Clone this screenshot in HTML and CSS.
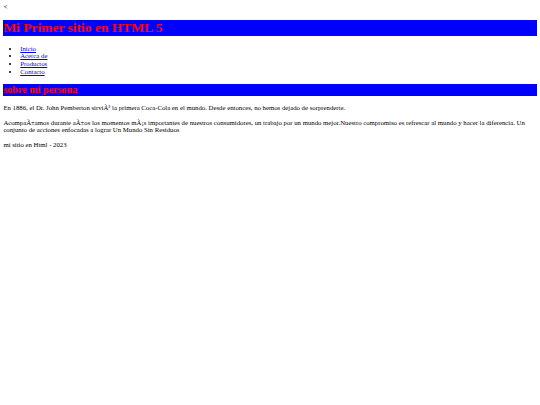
FILE: index.html
```html
<!DOCTYPE html>
<html lang="es">
<head>
<meta charset="utf-8">
<title>Mi Primer sitio en HTML 5</title>
<link rel="stylesheet" href="styles.css">
</head>
<body>
&lt;
<header>
<h1 class="title">Mi Primer sitio en HTML 5</h1>
</header>
<nav>
<ul class="menu">
<li><a href="#">Inicio</a></li>
<li><a href="#">Acerca de</a></li>
<li><a href="#">Productos</a></li>
<li><a href="#">Contacto</a></li>
</ul>
</nav>
<section>
<h2 class="subtitle">sobre mi persona</h2>
<p class="text">En 1886, el Dr. John Pemberton sirviÃ³ la primera Coca-Cola en el mundo. Desde entonces, no hemos dejado de sorprenderte.</p>
<p class="text">AcompaÃ±amos durante aÃ±os los momentos mÃ¡s importantes de nuestros consumidores, un trabajo por un mundo mejor.Nuestro compromiso es refrescar al mundo y hacer la diferencia. Un conjunto de acciones enfocadas a lograr Un Mundo Sin Residuos</p>
</section>
<footer>
<p class="text">mi sitio en Html - 2023</p>
</footer>
</body>
</html>
```
FILE: styles.css
```css
html {
  background: #ffffff;
}
body {
  margin: 3.375px;
  font-family: "Liberation Serif", "Times New Roman", serif;
  font-size: 6.75px;
  line-height: 1.15;
  color: #000000;
}
.title {
  font-size: 13.5px;
  margin: 9.05px 0;
  background: #0000ff;
  color: #ff0000;
}
.menu {
  margin: 6.75px 0;
  padding-left: 16.875px;
}
.menu a {
  color: #0000ee;
}
.subtitle {
  font-size: 10.125px;
  margin: 8.4px 0;
  background: #0000ff;
  color: #ff0000;
}
.text {
  margin: 6.75px 0;
}
```
